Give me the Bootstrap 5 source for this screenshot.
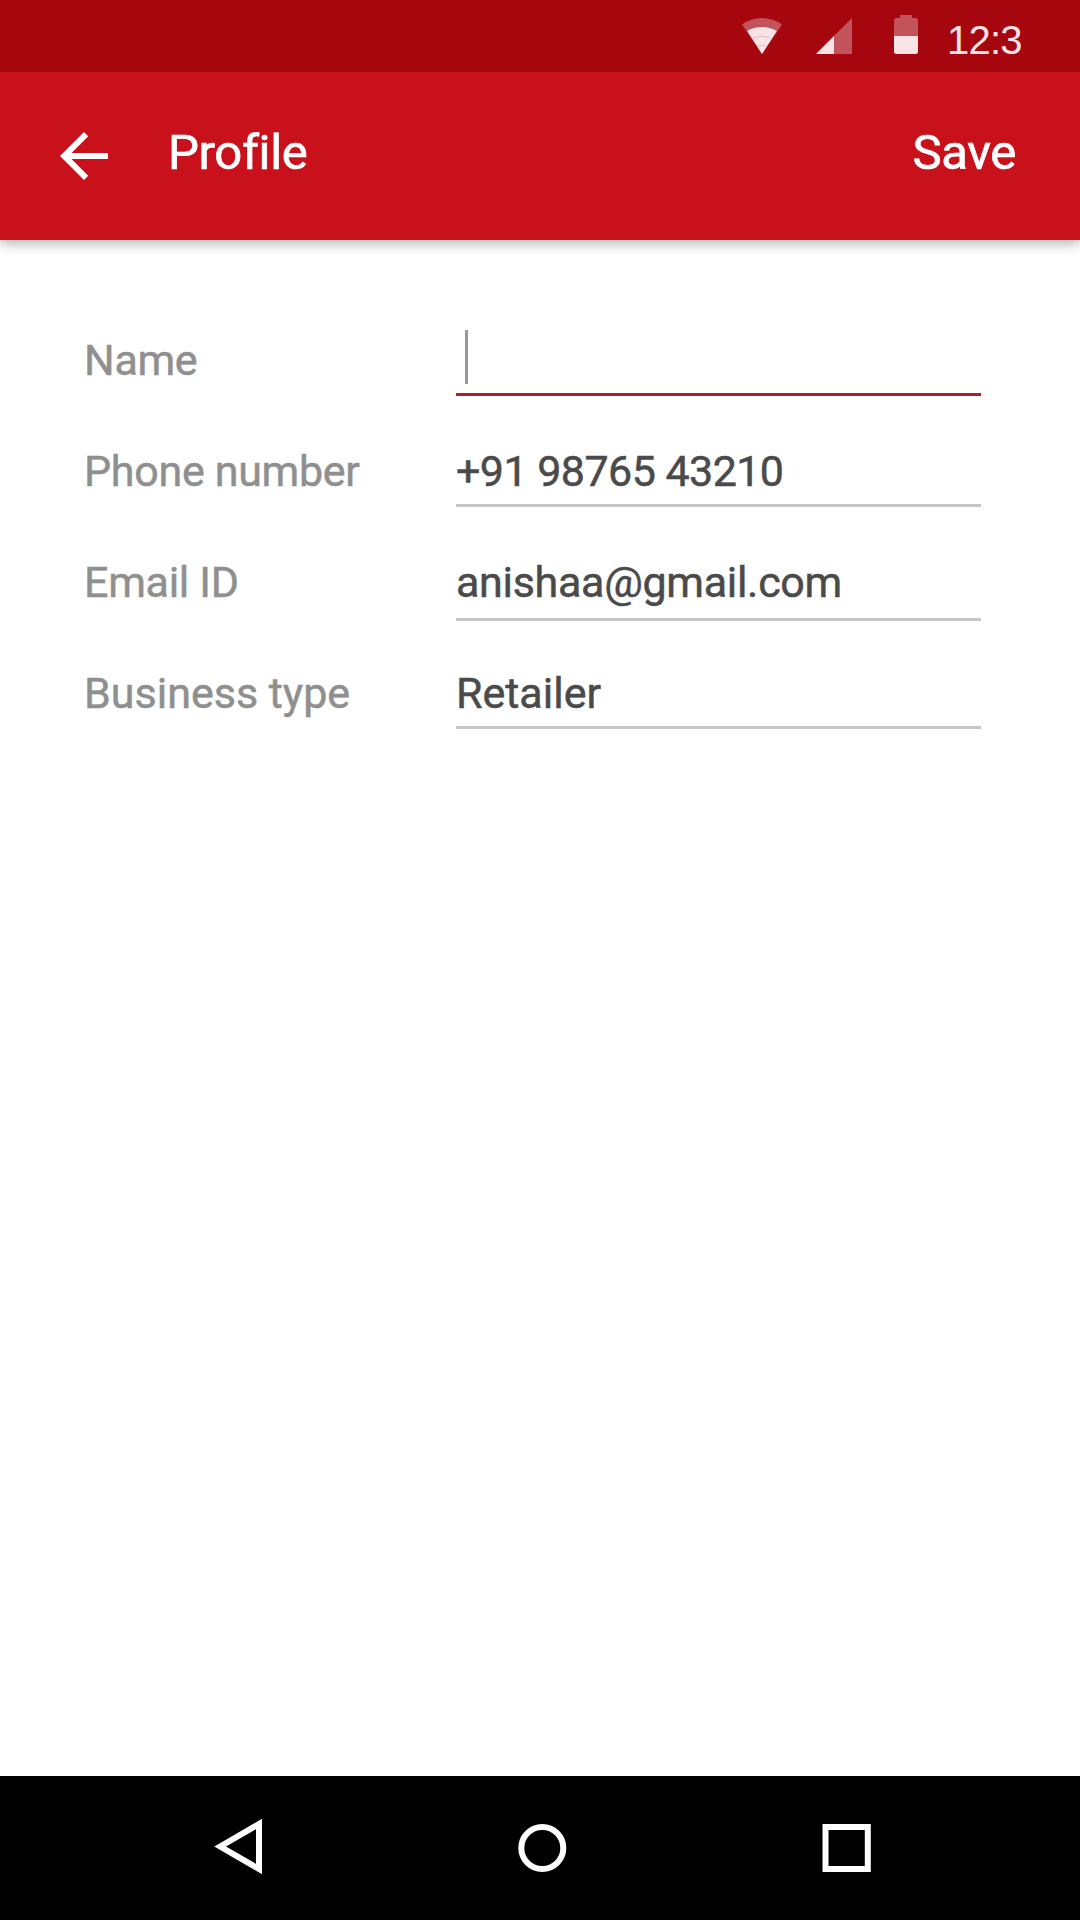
<!DOCTYPE html>
<html lang="en">
<head>
<meta charset="utf-8">
<meta name="viewport" content="width=device-width, initial-scale=1">
<title>Profile</title>
<link rel="stylesheet" href="https://cdn.jsdelivr.net/npm/bootstrap@5.3.0/dist/css/bootstrap.min.css">
<style>
body { font-family: Roboto, "Noto Sans", sans-serif; font-variant-ligatures: none; }
svg { display: block; flex: none; }
.status-bar { height: 72px; background: #a6070f; padding-right: 58px; z-index: 2; }
.clock { font: 40px/48px "Liberation Sans", Arial, sans-serif; letter-spacing: -.8px; color: #f8e4e6; width: 75px; margin-left: 27px; padding-top: 16px; height: 72px; white-space: nowrap; }
.app-bar { height: 168px; background: #c8111a; box-shadow: 0 3px 12px rgba(0,0,0,.33); padding: 0 64px 0 48px; z-index: 1; }
.bar-text { font-size: 49px; font-weight: 400; line-height: 60px; letter-spacing: -.35px; color: #fff; margin-top: 51px; -webkit-text-stroke: .7px currentColor; }
.back-btn { margin-top: 48px; margin-right: 48px; }
.profile-form { padding: 93px 99px 0 84px; }
.field-row { height: 111px; font-size: 43px; font-weight: 400; line-height: 54px; letter-spacing: -.3px; -webkit-text-stroke: .5px currentColor; }
.field-row:last-child { letter-spacing: 0; }
.field-label { width: 372px; color: #8f8f8f; }
.field-value { height: 63px; color: #4a4a4a; border-bottom: 3px solid #c6c6c6; }
.field-digits { letter-spacing: -.55px; }
.field-tall { height: 66px; }
.field-active { border-bottom-color: #b51c25; }
.caret { width: 3px; height: 54px; background: #999; margin: -3px 0 0 9px; }
.nav-bar { height: 144px; background: #000; }
</style>
<script src="https://cdn.jsdelivr.net/npm/bootstrap@5.3.0/dist/js/bootstrap.bundle.min.js"></script>
</head>
<body class="bg-white">
<div class="d-flex flex-column vh-100 overflow-hidden">
  <div class="status-bar d-flex justify-content-end position-relative">
    <svg width="180" height="72" viewBox="740 0 180 72">
      <path fill="#c3535b" d="M742 24.5Q751 18 762 18Q773 18 782 24.5L762 54Z"/>
      <path fill="#f8e4e6" d="M747.2 31Q754 27 762 27Q770 27 776.8 31L762 54Z"/>
      <path fill="none" stroke="#e9bcc0" d="M753 38.2Q762 34.5 771 38.2M757 46.2Q762 44.2 767 46.2"/>
      <path fill="#c3535b" d="M852 18V54H816Z"/>
      <path fill="#f8e4e6" d="M834 36V54H816Z"/>
      <path fill="#c3535b" d="M894 36V20.500Q894 18 896.500 18H900V15H912V18H915.500Q918 18 918 20.500V36Z"/>
      <path fill="#f8e4e6" d="M894 36H918V51.500Q918 54 915.500 54H896.500Q894 54 894 51.500Z"/>
    </svg>
    <div class="clock">12:3</div>
  </div>
  <header class="app-bar d-flex align-items-start position-relative">
    <a href="#" class="back-btn" aria-label="Back">
      <svg width="72" height="72" viewBox="0 0 24 24" fill="#fff"><path d="M20 11H7.830L13.420 5.410 12 4l-8 8 8 8 1.410-1.410L7.830 13H20z"/></svg>
    </a>
    <div class="bar-text">Profile</div>
    <div class="bar-text ms-auto" role="button">Save</div>
  </header>
  <main class="profile-form flex-grow-1">
    <div class="field-row d-flex">
      <div class="field-label">Name</div>
      <div class="field-value field-active flex-grow-1"><div class="caret"></div></div>
    </div>
    <div class="field-row d-flex">
      <div class="field-label">Phone number</div>
      <div class="field-value field-digits flex-grow-1">+91 98765 43210</div>
    </div>
    <div class="field-row d-flex">
      <div class="field-label">Email ID</div>
      <div class="field-value field-tall flex-grow-1">anishaa@gmail.com</div>
    </div>
    <div class="field-row d-flex">
      <div class="field-label">Business type</div>
      <div class="field-value flex-grow-1">Retailer</div>
    </div>
  </main>
  <nav class="nav-bar">
    <svg width="1080" height="144" viewBox="0 1776 1080 144" fill="none" stroke="#fff" stroke-width="6">
      <path d="M220.200 1846.500L259 1824V1869Z"/>
      <circle cx="542.300" cy="1848" r="21"/>
      <rect x="825.500" y="1827" width="42.300" height="42"/>
    </svg>
  </nav>
</div>
</body>
</html>
